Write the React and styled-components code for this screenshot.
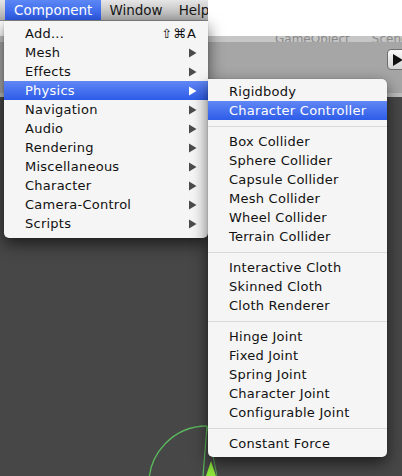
import React from 'react';
import styled, { createGlobalStyle } from 'styled-components';

const Global = createGlobalStyle`
  html, body { margin: 0; padding: 0; }
  body {
    width: 402px; height: 476px; overflow: hidden; background: #474747;
    font-family: "DejaVu Sans", "Liberation Sans", sans-serif;
  }
`;

const Screen = styled.div`
  position: relative;
  width: 402px;
  height: 476px;
  display: flex;
  flex-direction: column;
  overflow: hidden;
  background: #474747;
`;

const Header = styled.div`
  height: 36px;
  background: #ffffff;
  display: flex;
  align-items: flex-start;
`;

const MenuBar = styled.div`
  width: 208px;
  height: 21px;
  box-sizing: border-box;
  display: flex;
  align-items: stretch;
  padding-left: 5px;
  overflow: hidden;
  background: linear-gradient(#e6e6e6, #acacac);
  border-bottom: 1px solid #8c8c8c;
`;

const BarItem = styled.div`
  display: flex;
  align-items: center;
  padding: 0 ${p => (p.$active ? 9 : 8)}px;
  font-size: 13.5px;
  white-space: nowrap;
  color: ${p => (p.$active ? '#ffffff' : '#161616')};
  background: ${p => (p.$active ? 'linear-gradient(#5d87f5, #2b5ae6)' : 'transparent')};
`;

const Toolbar = styled.div`
  display: flex;
  flex-direction: column;
  background: #a6a6a6;
`;

const ToolbarStrip = styled.div`
  height: 6px;
  overflow: hidden;
  background: #c6c6c6;
  display: flex;
  align-items: flex-end;
  gap: 22px;
  padding-left: 275px;
  font-size: 12px;
  color: #8a8a8a;
  white-space: nowrap;
  & > span { line-height: 12px; margin-bottom: -3px; }
`;

const ToolbarMain = styled.div`
  height: 51px;
  display: flex;
  justify-content: flex-end;
  align-items: flex-start;
  padding-top: 7px;
  box-sizing: border-box;
`;

const PlayButton = styled.div`
  width: 22px;
  height: 21px;
  margin-right: -7px;
  box-sizing: border-box;
  border: 1px solid #6e6e6e;
  border-radius: 4px;
  background: linear-gradient(#fbfbfb, #d4d4d4);
  display: flex;
  align-items: center;
  padding-left: 5px;
`;

const ToolbarEdge = styled.div`
  height: 4px;
  background: #bdbdbd;
`;

const Scene = styled.div`
  position: relative;
  flex: 1;
  background: #474747;
`;

const Gizmo = styled.svg`
  position: absolute;
  left: 0;
  top: 0;
`;

const Menu = styled.div`
  position: absolute;
  left: ${p => p.$left}px;
  top: ${p => p.$top}px;
  width: ${p => p.$width}px;
  padding: ${p => p.$pad};
  box-sizing: border-box;
  background: #f5f5f5;
  border-radius: ${p => p.$radius};
  box-shadow: 0 6px 16px rgba(0, 0, 0, 0.6), 0 0 1px rgba(0, 0, 0, 0.4);
`;

const Item = styled.div`
  height: 19px;
  display: flex;
  align-items: center;
  justify-content: space-between;
  padding: 0 11px 0 21px;
  font-size: 13px;
  letter-spacing: 0.25px;
  white-space: nowrap;
  color: ${p => (p.$active ? '#ffffff' : '#111111')};
  background: ${p => (p.$active ? 'linear-gradient(#6187f5, #2d5ce8)' : 'transparent')};
`;

const Shortcut = styled.span`
  font-size: 13px;
  letter-spacing: 1px;
`;

const Separator = styled.div`
  height: 12px;
  box-sizing: border-box;
  padding-top: 6px;
  &::after {
    content: '';
    display: block;
    height: 1px;
    background: #d9d9d9;
  }
`;

const Arrow = ({ light }) => (
  <svg width="9" height="10" viewBox="0 0 9 10">
    <path d="M1 0.5 L8.5 5 L1 9.5 Z" fill={light ? '#ffffff' : '#4b4b4b'} />
  </svg>
);

const mainItems = [
  ['Mesh'], ['Effects'], ['Physics', true], ['Navigation'], ['Audio'], ['Rendering'],
  ['Miscellaneous'], ['Character'], ['Camera-Control'], ['Scripts'],
];

const subGroups = [
  [['Rigidbody'], ['Character Controller', true]],
  [['Box Collider'], ['Sphere Collider'], ['Capsule Collider'], ['Mesh Collider'], ['Wheel Collider'], ['Terrain Collider']],
  [['Interactive Cloth'], ['Skinned Cloth'], ['Cloth Renderer']],
  [['Hinge Joint'], ['Fixed Joint'], ['Spring Joint'], ['Character Joint'], ['Configurable Joint']],
  [['Constant Force']],
];

export default function App() {
  return (
    <>
      <Global />
      <Screen>
        <Header>
          <MenuBar>
            <BarItem $active>Component</BarItem>
            <BarItem>Window</BarItem>
            <BarItem>Help</BarItem>
          </MenuBar>
        </Header>
        <Toolbar>
          <ToolbarStrip>
            <span>GameObject</span>
            <span>Scene</span>
          </ToolbarStrip>
          <ToolbarMain>
            <PlayButton>
              <svg width="10" height="12" viewBox="0 0 10 12">
                <path d="M0 0 L10 6 L0 12 Z" fill="#111" />
              </svg>
            </PlayButton>
          </ToolbarMain>
          <ToolbarEdge />
        </Toolbar>
        <Scene>
          <Gizmo width="402" height="379" viewBox="0 0 402 379">
            <path d="M149 390 A58 58 0 0 1 207 329" fill="none" stroke="#5cb85c" strokeWidth="1.3" />
            <path d="M207 329 L203 379" fill="none" stroke="#5cb85c" strokeWidth="1.2" />
            <path d="M207 329 L217 379" fill="none" stroke="#5cb85c" strokeWidth="1.1" opacity="0.8" />
            <path d="M211 364 L206 379 L216 379 Z" fill="#8ee83a" />
          </Gizmo>
        </Scene>

        <Menu $left={4} $top={21} $width={204} $pad="3px 0 5px" $radius="0 0 5px 5px">
          <Item>
            <span>Add...</span>
            <Shortcut>⇧⌘A</Shortcut>
          </Item>
          {mainItems.map(([label, active]) => (
            <Item key={label} $active={active}>
              <span>{label}</span>
              <Arrow light={active} />
            </Item>
          ))}
        </Menu>

        <Menu $left={208} $top={79} $width={179} $pad="3px 0 4px" $radius="0 5px 5px 5px">
          {subGroups.map((group, gi) => (
            <React.Fragment key={gi}>
              {gi > 0 && <Separator />}
              {group.map(([label, active]) => (
                <Item key={label} $active={active}>
                  <span>{label}</span>
                </Item>
              ))}
            </React.Fragment>
          ))}
        </Menu>
      </Screen>
    </>
  );
}
